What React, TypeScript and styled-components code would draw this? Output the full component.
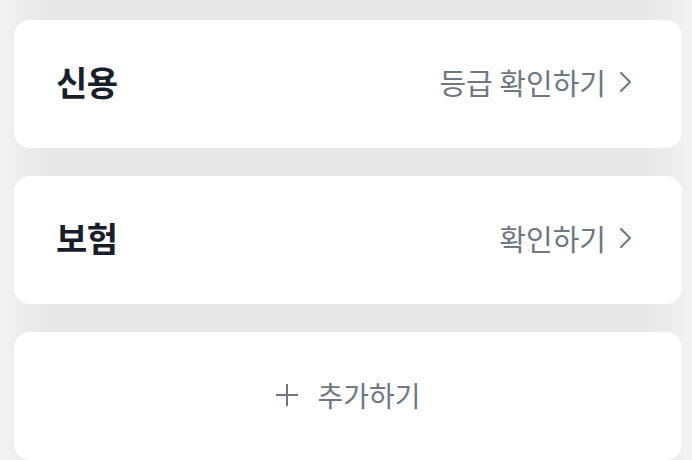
import React from "react";
import styled, { createGlobalStyle } from "styled-components";

const GlobalStyle = createGlobalStyle`
  html, body {
    margin: 0;
    padding: 0;
  }
  body {
    width: 692px;
    height: 460px;
    overflow: hidden;
    background: linear-gradient(
      to right,
      #f4f4f4 0px,
      #ebebeb 24px,
      #e8e8e8 48px,
      #e8e8e8 644px,
      #ebebeb 668px,
      #f4f4f4 692px
    );
    font-family: "Noto Sans CJK KR", "Noto Sans", sans-serif;
  }
`;

const Page = styled.div`
  display: flex;
  flex-direction: column;
  gap: 28px;
  padding: 20px 10px 0 14px;
`;

const Card = styled.div<{ $center?: boolean }>`
  height: 128px;
  background: #ffffff;
  border-radius: 16px;
  display: flex;
  align-items: center;
  justify-content: ${(p) => (p.$center ? "center" : "space-between")};
  padding: ${(p) => (p.$center ? "0 0 2px 0" : "0 50px 4px 42px")};
  box-sizing: border-box;
`;

const Title = styled.span`
  font-size: 34px;
  font-weight: 700;
  color: #191f28;
  letter-spacing: -0.5px;
  line-height: 1;
`;

const Action = styled.span`
  display: flex;
  align-items: center;
  gap: 13px;
  font-size: 29px;
  font-weight: 400;
  color: #6e7782;
  line-height: 1;
`;

const AddButton = styled.span`
  display: flex;
  align-items: center;
  gap: 18px;
  font-size: 28px;
  color: #6e7782;
  line-height: 1;
`;

const Chevron = () => (
  <svg width="13" height="22" viewBox="0 0 13 22" fill="none">
    <path d="M2 2 L11 11 L2 20" stroke="#6e7782" strokeWidth="2" strokeLinecap="round" strokeLinejoin="round" />
  </svg>
);

const Plus = () => (
  <svg width="24" height="24" viewBox="0 0 24 24" fill="none">
    <path d="M12 1 V23 M1 12 H23" stroke="#6e7782" strokeWidth="2" />
  </svg>
);

export default function App() {
  return (
    <>
      <GlobalStyle />
      <Page>
        <Card>
          <Title>신용</Title>
          <Action>
            등급 확인하기
            <Chevron />
          </Action>
        </Card>
        <Card>
          <Title>보험</Title>
          <Action>
            확인하기
            <Chevron />
          </Action>
        </Card>
        <Card $center>
          <AddButton>
            <Plus />
            추가하기
          </AddButton>
        </Card>
      </Page>
    </>
  );
}
